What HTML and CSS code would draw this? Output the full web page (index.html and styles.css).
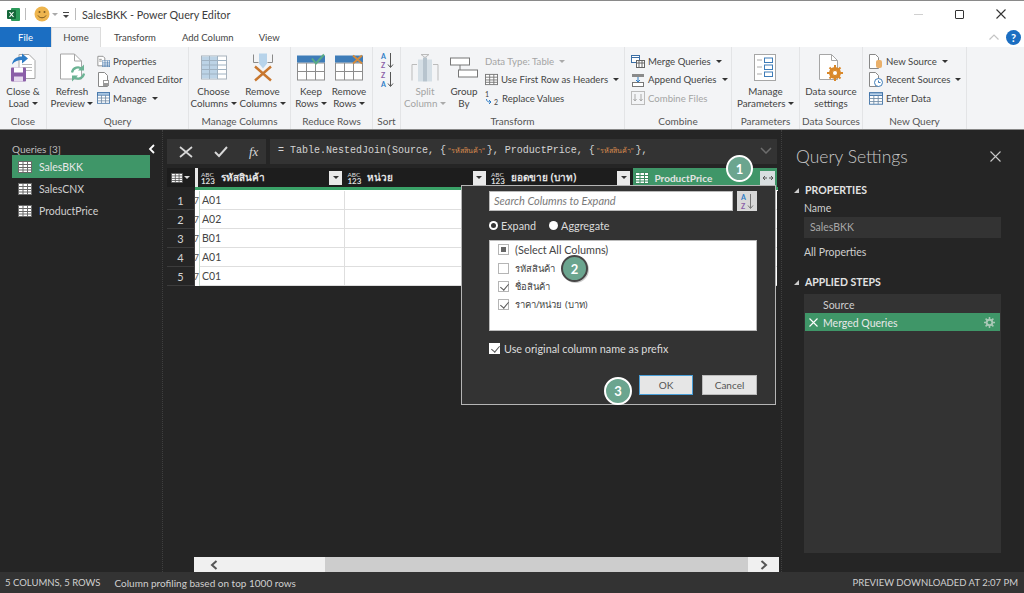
FILE: index.html
```html
<!DOCTYPE html>
<html lang="en">
<head>
<meta charset="utf-8">
<title>SalesBKK - Power Query Editor</title>
<link rel="stylesheet" href="styles.css">
</head>
<body>
<svg class="sprite" width="0" height="0">
  <symbol id="tbl" viewBox="0 0 14 12"><rect x=".5" y=".5" width="13" height="11" fill="#fff" stroke="currentColor"/><path d="M.5 3.500h13M.5 6.500h13M.5 9h13M5 .5v11M9.500 .5v11" stroke="currentColor" fill="none"/></symbol>
  <symbol id="tblb" viewBox="0 0 16 14"><rect x=".5" y=".5" width="15" height="13" fill="#fff" stroke="#3a6ea5"/><rect x=".5" y=".5" width="15" height="3" fill="#b9d2ea" stroke="#3a6ea5"/><path d="M.5 7h15M.5 10.500h15M5.500 3.500v10M10.500 3.500v10" stroke="#6f8aa5" fill="none"/></symbol>
</svg>

<div class="window">
  <header class="titlebar">
    <svg class="xl" width="15" height="15" viewBox="0 0 15 15"><rect x="5" y="1" width="9" height="13" rx="1" fill="#2c9a5b"/><rect x="1" y="3" width="9" height="9" rx="1" fill="#14683a"/><path d="M3.500 5l4 5M7.500 5l-4 5" stroke="#fff" stroke-width="1.200"/></svg>
    <span class="tsep"></span>
    <svg class="smile" width="16" height="16" viewBox="0 0 16 16"><circle cx="8" cy="8" r="7.500" fill="#eeb54e"/><circle cx="5.500" cy="6" r="1" fill="#7a5a20"/><circle cx="10.500" cy="6" r="1" fill="#7a5a20"/><path d="M4 9.500c1.500 3 6.500 3 8 0" stroke="#7a5a20" fill="none"/></svg>
    <i class="car lite tcaret"></i>
    <span class="qat"></span>
    <span class="tsep second"></span>
    <span class="title">SalesBKK - Power Query Editor</span>
    <span class="winbtns">
      <span class="wmin"></span>
      <span class="wmax"></span>
      <svg class="wclose" width="10" height="10" viewBox="0 0 10 10"><path d="M.5.500l9 9M9.500.5l-9 9" stroke="#333" stroke-width="1.100"/></svg>
    </span>
  </header>

  <nav class="tabs">
    <span class="tab file">File</span>
    <span class="tab home">Home</span>
    <span class="tab transform">Transform</span>
    <span class="tab addcol">Add Column</span>
    <span class="tab view">View</span>
    <span class="tabtools">
      <svg width="10" height="6" viewBox="0 0 10 6"><path d="M.5 5.500L5 1l4.500 4.500" stroke="#c4c4c4" fill="none" stroke-width="1.200"/></svg>
      <span class="help">?</span>
    </span>
  </nav>

  <section class="ribbon">
    <div class="group g-close">
      <div class="gbody center">
        <div class="big">
          <svg class="bicon" width="28" height="30" viewBox="0 0 28 30"><path d="M10 2h10l6 6v18H10z" fill="#fff" stroke="#a6a6a6"/><path d="M13 12h10M13 15h10M13 18h10" stroke="#bbb"/><path d="M3 12c1-6 5-8 10-8V1l6 5-6 5V7.500c-4 0-7 1-10 4.500z" fill="#2d7cc6"/><rect x="2" y="15" width="15" height="14" rx="1" fill="#8b5fa8"/><rect x="5" y="15" width="9" height="5" fill="#fff"/><rect x="5" y="24" width="9" height="5" fill="#e5daee"/></svg>
        <span class="lbl">Close &amp;<br>Load <i class="car"></i></span></div>
      </div>
      <div class="glabel">Close</div>
    </div>

    <div class="group g-query">
      <div class="gbody">
        <div class="big w-refresh">
          <svg class="bicon" width="26" height="30" viewBox="0 0 26 30"><path d="M1.500 1.500h14l7 7v18h-21z" fill="#fff" stroke="#a6a6a6"/><path d="M15.500 1.500v7h7" fill="none" stroke="#a6a6a6"/><path d="M13 20a6 6 0 0 1 10.500-3M25 21a6 6 0 0 1-10.500 3" stroke="#6bb394" stroke-width="2.200" fill="none"/><path d="M25 12v6h-6zM13 29v-6h6z" fill="#6bb394"/></svg>
          <span class="lbl">Refresh<br>Preview <i class="car"></i></span>
        </div>
        <div class="stack s-query">
          <div class="sm"><svg width="13" height="13" viewBox="0 0 15 13"><path d="M1 .5h6l2 2v9H1z" fill="#fff" stroke="#888"/><path d="M2.500 4h3M2.500 6h3" stroke="#888"/><use href="#tbl" x="6" y="5" width="9" height="8" color="#3a6ea5"/></svg>Properties</div>
          <div class="sm"><svg width="13" height="15" viewBox="0 0 13 15"><path d="M1.500.5h6l3 3v11h-9z" fill="#fff" stroke="#888"/><rect x="6" y="8" width="6" height="6" fill="#999"/><rect x="7" y="9" width="4" height="2" fill="#fff"/></svg>Advanced Editor</div>
          <div class="sm"><svg width="13" height="12"><use href="#tblb" width="13" height="12"/></svg>Manage <i class="car gap"></i></div>
        </div>
      </div>
      <div class="glabel">Query</div>
    </div>

    <div class="group g-cols">
      <div class="gbody">
        <div class="big w-choose">
          <svg class="bicon" width="26" height="24" viewBox="0 0 26 24"><rect x=".5" y=".5" width="25" height="23" fill="#fff" stroke="#a8b2bc"/><rect x="1" y="1" width="15" height="22" fill="#bcd3e6"/><path d="M.5 5h25M.5 9.500h25M.5 14h25M.5 18.500h25M8.500 .5v23M16.500 .5v23" stroke="#9fb2c2" fill="none"/></svg>
          <span class="lbl">Choose<br>Columns <i class="car"></i></span>
        </div>
        <div class="big w-remove">
          <svg class="bicon" width="22" height="28" viewBox="0 0 22 28"><path d="M1.500 1v8h5M20.500 1v8h-5" stroke="#8a8a8a" fill="none"/><path d="M7 0h8v10l-4 5-4-5z" fill="#b7d3ea"/><path d="M3 27L19 13M3 13l16 14" stroke="#c8772f" stroke-width="2.400"/></svg>
          <span class="lbl">Remove<br>Columns <i class="car"></i></span>
        </div>
      </div>
      <div class="glabel">Manage Columns</div>
    </div>

    <div class="group g-rows">
      <div class="gbody">
        <div class="big w-keep">
          <svg class="bicon" width="28" height="26" viewBox="0 0 28 26"><rect x=".5" y="8.500" width="27" height="17" fill="#fff" stroke="#8d8d8d"/><path d="M.5 17h27M9.500 8.500v17M18.500 8.500v17" stroke="#8d8d8d"/><rect x="0" y="1" width="28" height="7" fill="#3e7cb8"/><path d="M15 4l4 5 8-9" stroke="#5aab86" stroke-width="2" fill="none"/></svg>
          <span class="lbl">Keep<br>Rows <i class="car"></i></span>
        </div>
        <div class="big w-rem">
          <svg class="bicon" width="28" height="26" viewBox="0 0 28 26"><rect x=".5" y="8.500" width="27" height="17" fill="#fff" stroke="#8d8d8d"/><path d="M.5 17h27M9.500 8.500v17M18.500 8.500v17" stroke="#8d8d8d"/><rect x="0" y="1" width="28" height="7" fill="#3e7cb8"/><path d="M18 1l9 8M27 1l-9 8" stroke="#d18a3e" stroke-width="2"/></svg>
          <span class="lbl">Remove<br>Rows <i class="car"></i></span>
        </div>
      </div>
      <div class="glabel">Reduce Rows</div>
    </div>

    <div class="group g-sort">
      <div class="gbody center">
        <div class="sortstack">
          <svg width="14" height="17" viewBox="0 0 14 17"><text x="1" y="7" class="sa">A</text><text x="1" y="15.500" class="sz">Z</text><path d="M10.500 1v14M8 12.500l2.500 3 2.500-3" stroke="#555" fill="none"/></svg>
          <svg width="14" height="17" viewBox="0 0 14 17"><text x="1" y="7" class="sz">Z</text><text x="1" y="15.500" class="sa">A</text><path d="M10.500 1v14M8 12.500l2.500 3 2.500-3" stroke="#555" fill="none"/></svg>
        </div>
      </div>
      <div class="glabel">Sort</div>
    </div>

    <div class="group g-trans">
      <div class="gbody">
        <div class="big w-split dim">
          <svg class="bicon" width="28" height="28" viewBox="0 0 28 28"><rect x="7" y="6" width="5" height="22" fill="#d5dfe6"/><rect x="16" y="6" width="5" height="22" fill="#d5dfe6"/><rect x="12" y="4" width="4" height="24" fill="#b7c4ce"/><path d="M1 27V11h5M27 27V11h-5M10 1h8l-4 3z" stroke="#bbb" fill="none"/></svg>
          <span class="lbl">Split<br>Column <i class="car lite"></i></span>
        </div>
        <div class="big w-group">
          <svg class="bicon" width="28" height="20" viewBox="0 0 28 20"><rect x=".5" y=".5" width="19" height="7" fill="#fff" stroke="#777"/><rect x="8.500" y="12.500" width="19" height="7" fill="#fff" stroke="#777"/><path d="M10 7.500v5" stroke="#777"/></svg>
          <span class="lbl">Group<br>By</span>
        </div>
        <div class="stack s-trans">
          <div class="sm dim">Data Type: Table <i class="car lite gap"></i></div>
          <div class="sm"><svg width="13" height="13"><use href="#tbl" width="13" height="13" color="#777"/></svg>Use First Row as Headers <i class="car gap"></i></div>
          <div class="sm"><svg width="14" height="16" viewBox="0 0 14 16"><text x="0" y="7" class="num">1</text><text x="9" y="15" class="num">2</text><path d="M1.500 9c0 2 1 3 4 3M4 10l2 2-2 2" stroke="#2d7cc6" fill="none"/></svg>Replace Values</div>
        </div>
      </div>
      <div class="glabel">Transform</div>
    </div>

    <div class="group g-comb">
      <div class="gbody">
        <div class="stack s-comb">
          <div class="sm"><svg width="14" height="13" viewBox="0 0 14 13"><rect x=".5" y=".5" width="8" height="7" fill="#fff" stroke="#3a6ea5"/><path d="M.5 2.500h8" stroke="#3a6ea5"/><rect x="5.500" y="5.500" width="8" height="7" fill="#fff" stroke="#666"/><path d="M5.500 8h8M8 5.500v7M11 5.500v7" stroke="#666"/></svg>Merge Queries <i class="car gap"></i></div>
          <div class="sm"><svg width="14" height="14" viewBox="0 0 14 14"><rect x="1" y="1" width="12" height="3" fill="#8a8a8a"/><path d="M7 4v5M5 7l2 2 2-2" stroke="#2d7cc6" fill="none"/><rect x="1.500" y="9.500" width="11" height="4" fill="#fff" stroke="#777"/></svg>Append Queries <i class="car gap"></i></div>
          <div class="sm dim"><svg width="14" height="14" viewBox="0 0 14 14"><rect x=".5" y=".5" width="13" height="13" fill="none" stroke="#bbb"/><path d="M4 3v7M2.500 8L4 10l1.500-2M10 3v7M8.500 8l1.500 2 1.500-2" stroke="#aaa" fill="none"/></svg>Combine Files</div>
        </div>
      </div>
      <div class="glabel">Combine</div>
    </div>

    <div class="group g-params">
      <div class="gbody center">
        <div class="big">
          <svg class="bicon" width="22" height="27" viewBox="0 0 22 27"><rect x=".5" y=".5" width="21" height="26" fill="#fff" stroke="#a6a6a6"/><path d="M3 6h5M3 13h5M3 20h5" stroke="#aaa"/><rect x="10.500" y="4" width="8" height="4.500" fill="#fff" stroke="#3e7cb8"/><rect x="10.500" y="11" width="8" height="4.500" fill="#fff" stroke="#3e7cb8"/><rect x="10.500" y="18" width="8" height="4.500" fill="#fff" stroke="#3e7cb8"/></svg>
          <span class="lbl">Manage<br>Parameters <i class="car"></i></span>
        </div>
      </div>
      <div class="glabel">Parameters</div>
    </div>

    <div class="group g-src">
      <div class="gbody center">
        <div class="big">
          <svg class="bicon" width="24" height="27" viewBox="0 0 24 27"><path d="M.5.500h12l6 6v19H.5z" fill="#fff" stroke="#a6a6a6"/><path d="M12.500.5v6h6" fill="none" stroke="#a6a6a6"/><circle cx="16" cy="19" r="4.500" fill="none" stroke="#d9882a" stroke-width="3"/><path d="M16 11v16M8 19h16M10.500 13.500l11 11M21.500 13.500l-11 11" stroke="#d9882a" stroke-width="2"/><circle cx="16" cy="19" r="2" fill="#fff"/></svg>
          <span class="lbl">Data source<br>settings</span>
        </div>
      </div>
      <div class="glabel">Data Sources</div>
    </div>

    <div class="group g-new last">
      <div class="gbody">
        <div class="stack s-new">
          <div class="sm"><svg width="14" height="15" viewBox="0 0 14 15"><path d="M.5.500h6l3 3v11h-9z" fill="#fff" stroke="#888"/><rect x="7" y="6" width="6" height="8" rx="2" fill="#eab06a"/></svg>New Source <i class="car gap"></i></div>
          <div class="sm"><svg width="14" height="15" viewBox="0 0 14 15"><path d="M.5.500h6l3 3v11h-9z" fill="#fff" stroke="#888"/><circle cx="9.500" cy="10.500" r="4" fill="#fff" stroke="#3e7cb8"/><path d="M9.500 8.500v2h2" stroke="#3e7cb8" fill="none"/></svg>Recent Sources <i class="car gap"></i></div>
          <div class="sm"><svg width="14" height="13"><use href="#tblb" width="14" height="13"/></svg>Enter Data</div>
        </div>
      </div>
      <div class="glabel">New Query</div>
    </div>
  </section>

  <main class="body">
    <aside class="queries">
      <div class="qhead"><span>Queries [3]</span>
        <svg width="7" height="10" viewBox="0 0 7 10"><path d="M6 1L2 5l4 4" stroke="#fff" stroke-width="1.800" fill="none"/></svg>
      </div>
      <div class="qitem active"><svg width="14" height="12"><use href="#tbl" width="14" height="12" color="#6a6a6a"/></svg>SalesBKK</div>
      <div class="qitem"><svg width="14" height="12"><use href="#tbl" width="14" height="12" color="#6a6a6a"/></svg>SalesCNX</div>
      <div class="qitem"><svg width="14" height="12"><use href="#tbl" width="14" height="12" color="#6a6a6a"/></svg>ProductPrice</div>
    </aside>

    <section class="center-pane">
      <div class="formula">
        <div class="fxbox">
          <svg width="14" height="12" viewBox="0 0 14 12"><path d="M1 1l12 10M13 1L1 11" stroke="#d8d8d8" stroke-width="1.700"/></svg>
          <svg width="14" height="12" viewBox="0 0 14 12"><path d="M1 6l4 4 8-9" stroke="#d8d8d8" stroke-width="1.900" fill="none"/></svg>
          <span class="fx">fx</span>
        </div>
        <div class="fbar"><code>= Table.NestedJoin(Source, {<span class="str">"รหัสสินค้า"</span>}, ProductPrice, {<span class="str">"รหัสสินค้า"</span>},</code>
          <svg width="12" height="7" viewBox="0 0 12 7"><path d="M1 1l5 5 5-5" stroke="#6d6d6d" stroke-width="1.500" fill="none"/></svg>
        </div>
      </div>

      <div class="table">
        <div class="thead">
          <div class="corner"><svg width="12" height="10"><use href="#tbl" width="12" height="10" color="#555"/></svg><i class="car white"></i></div>
          <div class="th c1"><span class="abc">ABC<br>123</span><b>รหัสสินค้า</b><span class="dd"><i class="car"></i></span></div>
          <div class="th c2"><span class="abc">ABC<br>123</span><b>หน่วย</b><span class="dd"><i class="car"></i></span></div>
          <div class="th c3"><span class="abc">ABC<br>123</span><b>ยอดขาย (บาท)</b><span class="dd"><i class="car"></i></span></div>
          <div class="th c4 green"><svg width="14" height="12"><use href="#tbl" width="14" height="12" color="#3b8a5f"/></svg><b class="pp">ProductPrice</b>
            <span class="expand"><svg width="12" height="8" viewBox="0 0 12 8"><path d="M5 4H1M3 2L1 4l2 2M7 4h4M9 2l2 2-2 2" stroke="#555" fill="none"/></svg></span></div>
        </div>
        <div class="gbar"></div>
        <div class="tr"><span class="rn">1</span><span class="frag">7</span><span class="td c1">A01</span><span class="td c2"></span><span class="td rest"></span></div>
        <div class="tr"><span class="rn">2</span><span class="frag">7</span><span class="td c1">A02</span><span class="td c2"></span><span class="td rest"></span></div>
        <div class="tr"><span class="rn">3</span><span class="frag">7</span><span class="td c1">B01</span><span class="td c2"></span><span class="td rest"></span></div>
        <div class="tr"><span class="rn">4</span><span class="frag">7</span><span class="td c1">A01</span><span class="td c2"></span><span class="td rest"></span></div>
        <div class="tr"><span class="rn">5</span><span class="frag">7</span><span class="td c1">C01</span><span class="td c2"></span><span class="td rest"></span></div>
      </div>

      <div class="hscroll">
        <span class="sbtn"><svg width="8" height="10" viewBox="0 0 8 10"><path d="M6.500 1L2 5l4.500 4" stroke="#555" stroke-width="2" fill="none"/></svg></span>
        <span class="sthumb"></span>
        <span class="sbtn end"><svg width="8" height="10" viewBox="0 0 8 10"><path d="M1.500 1L6 5 1.500 9" stroke="#555" stroke-width="2" fill="none"/></svg></span>
      </div>
    </section>

    <aside class="settings">
      <div class="shead"><h1>Query Settings</h1>
        <svg width="11" height="11" viewBox="0 0 11 11"><path d="M.5.500l10 10M10.500.5l-10 10" stroke="#c9c9c9" stroke-width="1.100"/></svg>
      </div>
      <h2><i class="tri"></i>PROPERTIES</h2>
      <div class="slabel">Name</div>
      <div class="sinput">SalesBKK</div>
      <div class="slabel allprops">All Properties</div>
      <h2 class="h2steps"><i class="tri"></i>APPLIED STEPS</h2>
      <div class="steps">
        <div class="step">Source</div>
        <div class="step on">
          <svg class="sx" width="9" height="9" viewBox="0 0 9 9"><path d="M.5.500l8 8M8.500.5l-8 8" stroke="#fff" stroke-width="1.100"/></svg>
          Merged Queries
          <svg class="gear" width="11" height="11" viewBox="0 0 11 11"><circle cx="5.500" cy="5.500" r="2.800" fill="none" stroke="#a9c8b6" stroke-width="2"/><path d="M5.500 0v11M0 5.500h11M1.600 1.600l7.800 7.800M9.400 1.600l-7.800 7.800" stroke="#a9c8b6" stroke-width="1.500"/><circle cx="5.500" cy="5.500" r="1.800" fill="#3f9668"/></svg>
        </div>
      </div>
    </aside>

    <div class="dialog">
      <div class="searchrow">
        <div class="search">Search Columns to Expand</div>
        <span class="sortbtn"><svg width="14" height="17" viewBox="0 0 14 17"><text x="1" y="7" class="sa">A</text><text x="1" y="15.500" class="sz">Z</text><path d="M10.500 1v14M8 12.500l2.500 3 2.500-3" stroke="#777" fill="none"/></svg></span>
      </div>
      <div class="radios">
        <span class="radio"><i class="dot sel"></i>Expand</span>
        <span class="radio"><i class="dot"></i>Aggregate</span>
      </div>
      <div class="listbox">
        <div class="li first"><i class="cb mixed"></i>(Select All Columns)</div>
        <div class="li thai"><i class="cb"></i>รหัสสินค้า</div>
        <div class="li thai"><i class="cb checked"></i>ชื่อสินค้า</div>
        <div class="li thai"><i class="cb checked"></i>ราคา/หน่วย (บาท)</div>
      </div>
      <div class="prefix"><i class="cb checked solid"></i>Use original column name as prefix</div>
      <div class="actions">
        <span class="btn ok">OK</span>
        <span class="btn">Cancel</span>
      </div>
    </div>

    <span class="badge b1">1</span>
    <span class="badge b2">2</span>
    <span class="badge b3">3</span>
  </main>

  <footer class="status">
    <span class="st1">5 COLUMNS, 5 ROWS</span>
    <span class="st2">Column profiling based on top 1000 rows</span>
    <span class="st3">PREVIEW DOWNLOADED AT 2:07 PM</span>
  </footer>
</div>
</body>
</html>
```

FILE: styles.css
```css
* { box-sizing: border-box; }
html, body { margin: 0; padding: 0; height: 100%; overflow: hidden; }
body { font-family: Lato, "Open Sans", "Noto Sans", sans-serif; font-size: 10px; color: #444; background: #252525; }
.sprite { display: block; height: 0; }
i { font-style: normal; }
.window { width: 1024px; height: 593px; display: flex; flex-direction: column; }

/* title */
.titlebar { height: 27px; background: #fff; border-top: 1px solid #8a8a8a; display: flex; align-items: center; padding-left: 6px; flex: none; }
.xl { margin-right: 4px; }
.tsep { width: 1px; height: 12px; background: #bbb; }
.smile { margin-left: 8px; }
.tcaret { margin-left: 2px; }
.qat { width: 6px; height: 5px; margin-left: 5px; border-top: 1px solid #444; position: relative; }
.qat::after { content: ""; position: absolute; left: 0; top: 2px; border: 3px solid transparent; border-top-color: #444; border-bottom: 0; }
.tsep.second { margin-left: 6px; }
.title { font-size: 10.800px; color: #3c3c3c; margin-left: 6px; }
.winbtns { margin-left: auto; display: flex; align-items: center; gap: 32px; padding-right: 18px; }
.wmin { width: 9px; height: 1px; background: #d0d0d0; }
.wmax { width: 9px; height: 9px; border: 1px solid #333; border-radius: 1px; }

/* tabs */
.tabs { height: 20px; background: #fff; display: flex; align-items: stretch; position: relative; flex: none; }
.tab { display: flex; align-items: center; justify-content: center; font-size: 9.500px; }
.tab.file { width: 51px; background: #1b6ec2; color: #fff; }
.tab.home { width: 50px; background: #f3f4f6; border: 1px solid #dcdcdc; border-bottom: 0; }
.tab.transform { margin-left: 13px; }
.tab.addcol { margin-left: 26px; }
.tab.view { margin-left: 25px; }
.tabtools { margin-left: auto; display: flex; align-items: center; gap: 7px; padding-right: 3px; }
.help { width: 15px; height: 15px; border-radius: 50%; background: #1b6ec2; color: #fff; font-size: 11px; font-weight: 700; display: flex; align-items: center; justify-content: center; }

/* ribbon */
.ribbon { height: 83px; flex: none; display: flex; background: #f3f4f6; border-bottom: 1px solid #888; }
.group { display: flex; flex-direction: column; border-right: 1px solid #e3e4e6; }
.g-close { width: 47px; }
.g-query { width: 142px; }
.g-cols { width: 102px; }
.g-rows { width: 82px; }
.g-sort { width: 28px; }
.g-trans { width: 224px; }
.g-comb { width: 107px; }
.g-params { width: 68px; }
.g-src { width: 63px; }
.g-new { width: 104px; }
.gbody { flex: 1; display: flex; min-height: 0; }
.gbody.center { justify-content: center; }
.glabel { height: 17px; text-align: center; font-size: 10px; color: #555; line-height: 18px; }
.big { display: flex; flex-direction: column; align-items: center; height: 65px; padding-top: 5px; text-align: center; flex: none; }
.bicon { height: 31px; flex: none; margin-bottom: 2px; }
.lbl { line-height: 12px; white-space: nowrap; color: #444; font-size: 9.800px; }
.dim .lbl, .sm.dim { color: #a4a4a4; }
.car { display: inline-block; width: 0; height: 0; border: 3px solid transparent; border-top: 3px solid #333; border-bottom: 0; vertical-align: 2px; }
.car.lite { border-top-color: #aaa; }
.car.white { border-top-color: #ddd; }
.car.gap { margin-left: 3px; }
.w-refresh { width: 44px; margin-left: 3px; }
.s-query { margin-left: 3px; }
.w-choose { width: 49px; }
.w-remove { width: 49px; }
.w-keep { width: 38px; margin-left: 1px; }
.w-rem { width: 38px; }
.w-split { width: 44px; margin-left: 2px; }
.w-group { width: 34px; }
.s-trans { margin-left: 4px; }
.s-comb { margin-left: 6px; }
.s-new { margin-left: 6px; }
.stack { display: flex; flex-direction: column; padding-top: 5px; }
.sm { height: 18.500px; display: flex; align-items: center; gap: 2px; white-space: nowrap; color: #444; font-size: 9.600px; }
.sm svg { flex: none; margin-right: 1px; }
.sm .car { flex: none; }
.sortstack { display: flex; flex-direction: column; gap: 2px; padding-top: 5px; }
.sa { font-size: 7px; font-weight: 700; fill: #2d7cc6; }
.sz { font-size: 7px; font-weight: 700; fill: #8b5fa8; }
.num { font-size: 7px; fill: #444; }

/* body */
.body { flex: 1; min-height: 0; display: flex; position: relative; background: #252525; }
.queries { width: 163px; flex: none; border-right: 1px dotted #3f3f3f; padding: 12px 12px 0; }
.qhead { display: flex; justify-content: space-between; align-items: center; height: 13px; color: #bdbdbd; font-size: 10px; margin-right: -5px; }
.qitem { height: 22px; display: flex; align-items: center; gap: 7px; padding-left: 6px; font-size: 10.500px; color: #cfcfcf; width: 138px; }
.qitem.active { background: #3f9668; color: #e8e8e8; height: 23px; }
.center-pane { width: 619px; flex: none; padding: 9px 4px 0; display: flex; flex-direction: column; border-right: 1px dotted #3f3f3f; }
.formula { display: flex; gap: 4px; height: 25px; flex: none; }
.fxbox { width: 99px; background: #333; display: flex; align-items: center; gap: 21px; padding-left: 12px; }
.fx { font-family: "Liberation Serif", serif; font-style: italic; font-size: 13px; color: #d8d8d8; }
.fbar { flex: 1; background: #333; display: flex; align-items: center; justify-content: space-between; padding: 0 5px 2px 8px; }
.fbar code { font-family: "Liberation Mono", monospace; font-size: 10px; color: #d4d4d4; white-space: nowrap; }
.str { color: #d98a4e; font-size: 7.200px; font-family: "Open Sans", sans-serif; padding: 0 2px; }
.table { margin-top: 4px; flex: none; }
.thead { display: flex; height: 19px; background: #1d1d1d; }
.corner { width: 28px; display: flex; align-items: center; justify-content: center; gap: 1px; }
.th { display: flex; align-items: center; color: #e4e4e4; position: relative; padding-left: 3px; }
.th b { font-weight: 700; font-size: 10px; white-space: nowrap; font-family: "Open Sans", sans-serif; }
.th b.pp { font-size: 10px; font-family: Lato, sans-serif; }
.th.c1 { width: 150px; border-left: 3px solid #e8e8e8; }
.th.c2 { width: 144px; }
.th.c3 { width: 145px; }
.th.c4 { width: 144px; margin-left: 1px; }
.green { background: #3f9668; gap: 5px; padding-left: 2px; }
.abc { font-size: 8px; line-height: 7px; width: 15px; margin-right: 5px; color: #ddd; flex: none; font-weight: 700; }
.abc::first-line { font-size: 6.500px; font-weight: 400; }
.dd { margin-left: auto; margin-right: 2px; width: 13px; height: 14px; background: #e9e9e9; display: flex; align-items: center; justify-content: center; flex: none; }
.expand { position: absolute; right: 2px; top: 3px; width: 15px; height: 14px; background: #d8dee0; display: flex; align-items: center; justify-content: center; }
.gbar { height: 4px; margin-left: 28px; background: linear-gradient(#3aa268 3px, #fff 3px); width: 583px; }
.tr { display: flex; height: 19px; position: relative; background: #fff; color: #444; }
.rn { width: 28px; background: #252525; color: #d4d4d4; font-size: 11px; border: 1px solid #3c3c3c; border-width: 0 1px 1px 0; display: flex; align-items: center; justify-content: center; }
.frag { width: 4px; overflow: hidden; font-size: 9px; line-height: 19px; color: #555; border-right: 1px solid #c5d9cc; box-sizing: content-box; direction: rtl; }
.td { border: 1px solid #dedede; border-width: 0 0 1px 0; font-size: 10.500px; line-height: 18px; padding-left: 2px; }
.td.c1 { width: 145px; border-right: 1px solid #dedede; }
.td.c2 { width: 144px; border-right: 0; }
.td.rest { flex: 1; }
.hscroll { margin-top: auto; margin-left: 27px; width: 585px; height: 15px; display: flex; background: #f0f0f0; flex: none; }
.sbtn { width: 40px; display: flex; align-items: center; justify-content: center; }
.sbtn.end { width: 31px; }
.sthumb { flex: 1; background: #cdcdcd; margin-left: 91px; }

/* settings */
.settings { flex: 1; padding: 0 23px 19px 14px; display: flex; flex-direction: column; }
.shead { display: flex; justify-content: space-between; align-items: center; height: 24px; margin-top: 14px; padding-right: 2px; margin-right: -2px; }
.shead h1 { margin: 0; font-size: 17.500px; font-weight: 300; color: #c8c8c8; white-space: nowrap; }
h2 { margin: 16px 0 0; font-size: 10.500px; font-weight: 700; color: #e2e2e2; height: 13px; line-height: 13px; padding-left: 9px; position: relative; white-space: nowrap; }
.h2steps { margin-top: 17px; }
.tri { position: absolute; left: -2px; top: 4px; border-left: 5px solid transparent; border-bottom: 5px solid #ccc; }
.slabel { font-size: 10.500px; color: #cfcfcf; margin: 5px 0 0 8px; height: 13px; line-height: 13px; }
.sinput { margin: 2px 0 0 8px; height: 21px; width: 197px; background: #333; color: #a8a8a8; font-size: 10.500px; padding-left: 6px; line-height: 21px; flex: none; }
.allprops { margin-top: 8px; }
.steps { margin: 5px 0 0 8px; width: 197px; flex: 1; background: #333; padding-top: 1px; }
.step { height: 18px; margin: 0 1px; padding: 1px 0 0 18px; line-height: 18px; font-size: 10.500px; color: #cfcfcf; position: relative; }
.step.on { background: #3f9668; color: #e8e8e8; display: flex; align-items: center; }
.sx { position: absolute; left: 4px; top: 5px; }
.gear { position: absolute; right: 5px; top: 4px; }

/* dialog */
.dialog { position: absolute; left: 461px; top: 55px; width: 315px; height: 220px; background: #333; border: 1px solid #b5b5b5; padding: 5px 18px 0 27px; display: flex; flex-direction: column; z-index: 2; color: #dcdcdc; font-size: 10.800px; }
.searchrow { display: flex; gap: 4px; height: 20px; flex: none; }
.search { flex: 1; background: #fff; border: 1px solid #bbb; color: #7a7a7a; font-style: italic; font-size: 11px; line-height: 18px; padding-left: 4px; }
.sortbtn { width: 20px; background: #d8d8d8; display: flex; align-items: center; justify-content: center; }
.radios { display: flex; gap: 13px; height: 14px; margin-top: 7px; align-items: center; flex: none; }
.radio { display: flex; align-items: center; gap: 3px; }
.dot { width: 9px; height: 9px; border-radius: 50%; background: #fff; position: relative; }
.dot.sel::after { content: ""; position: absolute; inset: 2px; border-radius: 50%; background: #333; }
.listbox { margin-top: 8px; height: 91px; background: #fff; border: 1px solid #bbb; padding: 0 8px; color: #444; flex: none; }
.li { height: 18px; display: flex; align-items: center; gap: 6px; }
.li.first { padding-bottom: 1px; }
.li.thai { font-size: 9.500px; font-family: "Open Sans", sans-serif; }
.cb { width: 11px; height: 11px; border: 1px solid #b5b5b5; background: #fff; position: relative; flex: none; display: block; }
.cb.mixed::after { content: ""; position: absolute; inset: 2px; background: #666; }
.cb.checked::after { content: ""; position: absolute; left: 3px; top: 0; width: 4px; height: 7px; border: solid #555; border-width: 0 1.300px 1.300px 0; transform: rotate(40deg); }
.prefix { display: flex; align-items: center; gap: 4px; margin-top: 10px; height: 14px; flex: none; }
.cb.solid { border-color: #fff; }
.actions { margin-top: 20px; display: flex; justify-content: flex-end; gap: 9px; flex: none; }
.btn { width: 55px; height: 20px; background: #e6e6e6; color: #555; border: 1px solid #bbb; display: flex; align-items: center; justify-content: center; font-size: 10px; }
.btn.ok { border-color: #4a9fd8; width: 54px; }

/* badges */
.badge { position: absolute; z-index: 3; border-radius: 50%; background: #6ba58f; color: #fff; font-weight: 700; font-size: 13px; display: flex; align-items: center; justify-content: center; width: 27px; height: 27px; border: 2px solid #fff; }
.b1 { left: 726px; top: 25px; }
.b2 { left: 561px; top: 125px; border-color: #464646; box-shadow: 1px 1px 0 #ccc; }
.b3 { left: 604px; top: 247px; width: 28px; height: 28px; }

/* status */
.status { height: 21px; flex: none; background: #333; display: flex; align-items: center; padding: 0 6px 0 5px; color: #d0d0d0; font-size: 9.500px; white-space: nowrap; }
.st2 { margin-left: 14px; font-size: 10px; }
.st3 { margin-left: auto; }
```
